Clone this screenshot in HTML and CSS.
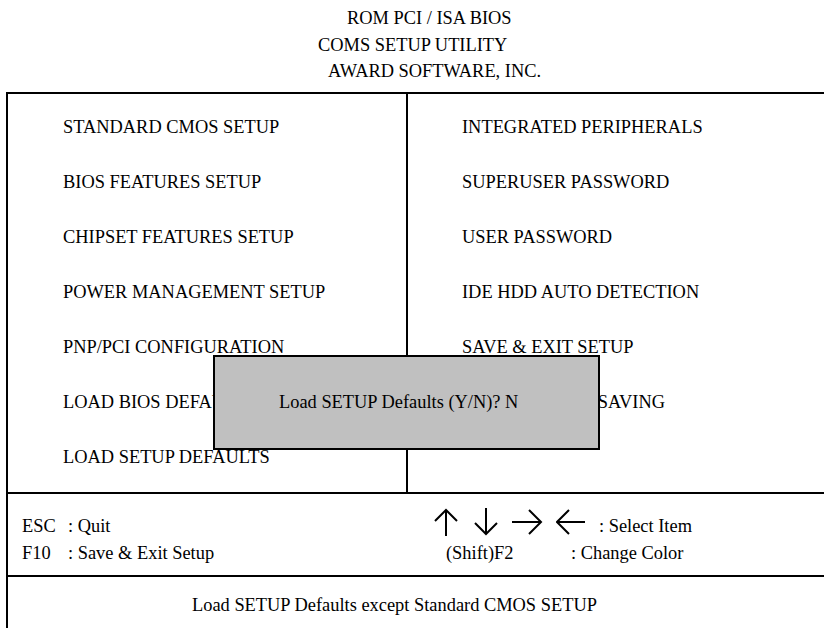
FILE: index.html
```html
<!DOCTYPE html>
<html>
<head>
<meta charset="utf-8">
<link rel="stylesheet" href="styles.css">
</head>
<body>
<div class="screen">
  <header class="head">
    <div class="head-line l1">ROM PCI / ISA BIOS</div>
    <div class="head-line l2">COMS SETUP UTILITY</div>
    <div class="head-line l3">AWARD SOFTWARE, INC.</div>
  </header>
  <div class="frame">
    <div class="menu">
      <ul class="col col-left">
        <li>STANDARD CMOS SETUP</li>
        <li>BIOS FEATURES SETUP</li>
        <li>CHIPSET FEATURES SETUP</li>
        <li>POWER MANAGEMENT SETUP</li>
        <li>PNP/PCI CONFIGURATION</li>
        <li>LOAD BIOS DEFAULTS</li>
        <li>LOAD SETUP DEFAULTS</li>
      </ul>
      <ul class="col col-right">
        <li>INTEGRATED PERIPHERALS</li>
        <li>SUPERUSER PASSWORD</li>
        <li>USER PASSWORD</li>
        <li>IDE HDD AUTO DETECTION</li>
        <li>SAVE &amp; EXIT SETUP</li>
        <li>EXIT WITHOUT SAVING</li>
        <li></li>
      </ul>
    </div>
    <div class="keys">
      <div class="key-row">
        <span class="k">ESC</span>
        <span class="d d-quit">: Quit</span>
        <span class="arrows">
          <svg class="arrow" width="24" height="28" viewBox="0 0 24 28"><path d="M12 28V2M1 13L12 2L23 13"/></svg>
          <svg class="arrow" width="26" height="28" viewBox="0 0 26 28"><path d="M13 0V26M2 15L13 26L24 15"/></svg>
          <svg class="arrow" width="31" height="28" viewBox="0 0 31 28"><path d="M0 14H29M17 2L29 14L17 26"/></svg>
          <svg class="arrow" width="29" height="28" viewBox="0 0 29 28"><path d="M29 14H1M13 2L1 14L13 26"/></svg>
        </span>
        <span class="d">: Select Item</span>
      </div>
      <div class="key-row">
        <span class="k">F10</span>
        <span class="d d-save">: Save &amp; Exit Setup</span>
        <span class="shift">(Shift)F2</span>
        <span class="d">: Change Color</span>
      </div>
    </div>
    <div class="help">Load SETUP Defaults except Standard CMOS SETUP</div>
  </div>
  <div class="dialog">Load SETUP Defaults (Y/N)? N</div>
</div>
</body>
</html>
```

FILE: styles.css
```css
html, body {
  margin: 0;
  padding: 0;
  background: #ffffff;
  overflow: hidden;
}
body {
  width: 824px;
  height: 628px;
  font-family: "Liberation Serif", "Times New Roman", serif;
  font-size: 18.4px;
  color: #000;
}
.screen {
  position: relative;
  width: 824px;
  height: 628px;
  overflow: hidden;
}
.head {
  height: 92px;
  padding-top: 5px;
  box-sizing: border-box;
}
.head-line {
  height: 26.5px;
  line-height: 26.5px;
  white-space: nowrap;
}
.l1 { padding-left: 347px; }
.l2 { padding-left: 318px; }
.l3 { padding-left: 328px; }

.frame {
  margin-left: 6px;
  width: 840px;
  border: 2px solid #000;
  border-bottom: none;
  height: 560px;
}
.menu {
  display: flex;
  border-bottom: 2px solid #000;
  height: 400px;
  box-sizing: border-box;
}
.col {
  list-style: none;
  margin: 0;
  padding: 6px 0 0 0;
}
.col li {
  height: 55px;
  line-height: 55px;
  white-space: nowrap;
}
.col-left {
  width: 400px;
  box-sizing: border-box;
  border-right: 2px solid #000;
  padding-left: 55px;
}
.col-right {
  padding-left: 54px;
}
.keys {
  height: 83px;
  box-sizing: border-box;
  border-bottom: 2px solid #000;
  padding: 19px 0 0 14px;
}
.key-row {
  display: flex;
  align-items: center;
  height: 27px;
  line-height: 27px;
  white-space: nowrap;
}
.k { width: 46px; }
.d-quit { width: 366px; }
.d-save { width: 378px; }
.shift { width: 125px; }
.arrows {
  width: 165px;
  display: flex;
  align-items: center;
  gap: 13px;
  position: relative;
  top: -5px;
}
.arrow {
  display: block;
  fill: none;
  stroke: #000;
  stroke-width: 2;
}
.arrow:nth-child(2) { margin-left: 2px; }
.help {
  padding-left: 184px;
  line-height: 56px;
  white-space: nowrap;
}
.dialog {
  position: absolute;
  left: 213px;
  top: 355px;
  width: 387px;
  height: 95px;
  box-sizing: border-box;
  border: 2px solid #000;
  background: #c0c0c0;
  padding-left: 64px;
  line-height: 91px;
  white-space: nowrap;
}
```
